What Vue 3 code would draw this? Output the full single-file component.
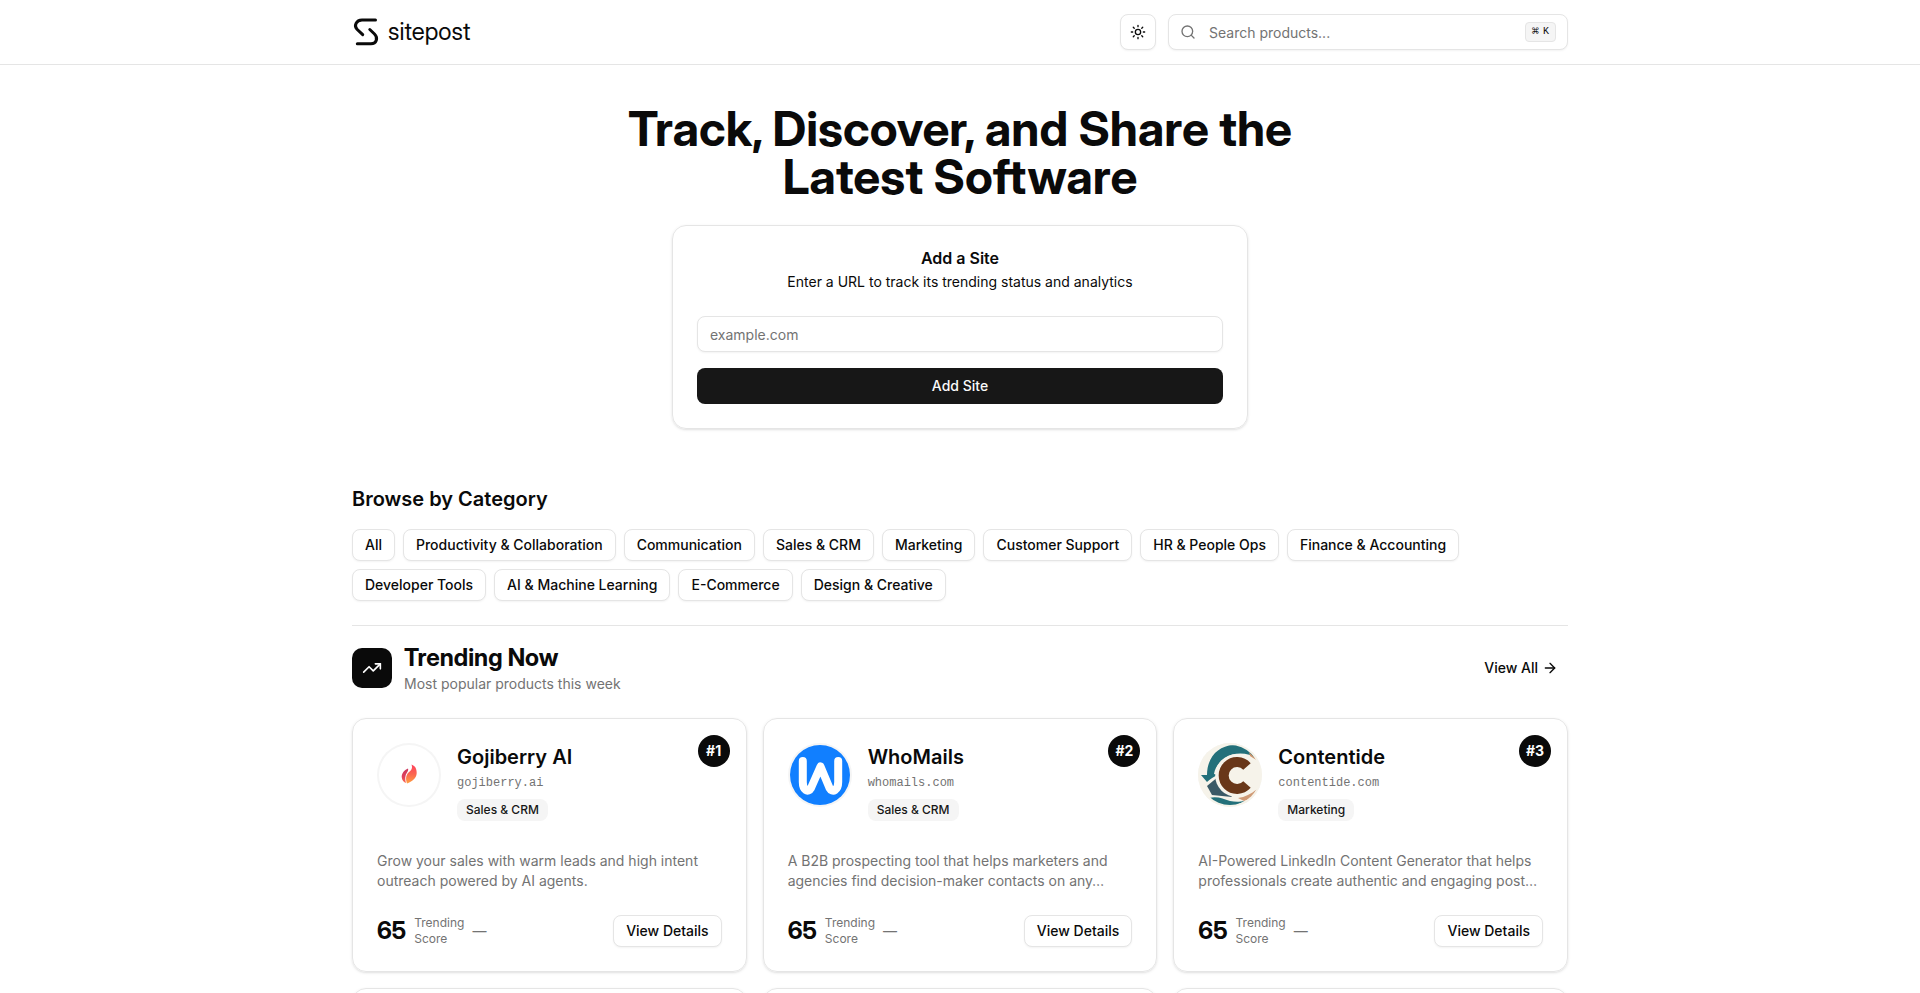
<template>
  <div class="page">
    <header class="site-header">
      <div class="container header-inner">
        <a href="#" class="brand">
          <svg class="brand-mark" viewBox="0 0 28 28" fill="none" stroke="currentColor" stroke-width="3" stroke-linecap="round" stroke-linejoin="round" aria-hidden="true">
            <path d="M23.500 2H10C4 2 1.800 8 5 11.200L10.700 16.700" />
            <path d="M17.800 11.500L22.500 16C26.500 20 24.300 25.800 19 25.800H5.300" />
          </svg>
          <span class="brand-name">sitepost</span>
        </a>
        <div class="header-actions">
          <button type="button" class="theme-toggle" aria-label="Toggle theme">
            <svg class="icon" viewBox="0 0 24 24" aria-hidden="true">
              <circle cx="12" cy="12" r="4" />
              <path d="M12 2v2M12 20v2M4.930 4.930l1.410 1.410M17.660 17.660l1.410 1.410M2 12h2M20 12h2M6.340 17.660l-1.410 1.410M19.070 4.930l-1.410 1.410" />
            </svg>
          </button>
          <label class="search">
            <svg class="icon search-icon" viewBox="0 0 24 24" aria-hidden="true">
              <circle cx="11" cy="11" r="8" />
              <path d="m21 21-4.300-4.300" />
            </svg>
            <input v-model="query" type="text" placeholder="Search products..." aria-label="Search products" />
            <kbd><span class="key-symbol">⌘</span><span>K</span></kbd>
          </label>
        </div>
      </div>
    </header>

    <main class="container">
      <section class="hero">
        <h1>Track, Discover, and Share the Latest Software</h1>
        <form class="add-card" @submit.prevent="addSite">
          <h2>Add a Site</h2>
          <p>Enter a URL to track its trending status and analytics</p>
          <input v-model="siteUrl" type="text" placeholder="example.com" aria-label="Site URL" />
          <button type="submit">Add Site</button>
        </form>
      </section>

      <section class="categories">
        <h2>Browse by Category</h2>
        <div class="category-list">
          <button v-for="category in categories" :key="category" type="button" class="outline-button">{{ category }}</button>
        </div>
      </section>

      <section class="trending">
        <div class="trending-header">
          <div class="trending-icon">
            <svg class="icon" viewBox="0 0 24 24" aria-hidden="true">
              <path d="M16 7h6v6" />
              <path d="m22 7-8.500 8.500-5-5L2 17" />
            </svg>
          </div>
          <div class="trending-title">
            <h2>Trending Now</h2>
            <p>Most popular products this week</p>
          </div>
          <a href="#" class="view-all">
            View All
            <svg class="icon" viewBox="0 0 24 24" aria-hidden="true">
              <path d="M5 12h14" />
              <path d="m12 5 7 7-7 7" />
            </svg>
          </a>
        </div>

        <div class="product-grid">
          <article v-for="product in products" :key="product.domain" class="product-card">
            <span class="rank">#{{ product.rank }}</span>
            <div class="product-head">
              <div class="avatar">
                <svg v-if="product.logo === 'flame'" viewBox="0 0 64 64" aria-hidden="true">
                  <defs>
                    <linearGradient id="flame" x1="0" y1="0" x2="0" y2="1">
                      <stop offset="0" stop-color="#ff405c" />
                      <stop offset="0.5" stop-color="#fb6550" />
                      <stop offset="1" stop-color="#ffa041" />
                    </linearGradient>
                    <linearGradient id="ember" x1="0" y1="0" x2="0" y2="1">
                      <stop offset="0" stop-color="#c9375d" />
                      <stop offset="0.6" stop-color="#e0405c" />
                      <stop offset="1" stop-color="#ff704e" />
                    </linearGradient>
                  </defs>
                  <path d="M34.500 21.500C38.500 23 39.700 26 39.700 30C39.500 35.500 35 38.500 30 40.500C28.500 36 28.800 32 31.500 29.500C34 27.500 36 25.500 34.500 21.500Z" fill="url(#flame)" />
                  <path d="M31 25.500C27 27 24.700 30.500 24.700 34C24.800 37.500 27 39.300 29 40C27.700 36.500 28 32 30 29.500C31 28 31.500 27 31 25.500Z" fill="url(#ember)" />
                </svg>
                <svg v-else-if="product.logo === 'wave'" viewBox="0 0 64 64" aria-hidden="true">
                  <circle cx="32" cy="32" r="30" fill="#117fff" />
                  <path d="M14.800 18V39C14.800 47 20 50.500 23 45L32.500 23.500L41.500 45C44.500 50.500 50.200 47 50.200 39V18" fill="none" stroke="#fff" stroke-width="8" stroke-linecap="round" stroke-linejoin="round" />
                </svg>
                <svg v-else viewBox="0 0 64 64" aria-hidden="true">
                  <defs>
                    <clipPath id="disc"><circle cx="32" cy="32" r="30" /></clipPath>
                  </defs>
                  <circle cx="32" cy="32" r="32" fill="#f6f3ea" />
                  <g clip-path="url(#disc)">
                    <path d="M9 32C9 12 23 1 39 2C49 3 56 9 59 16C50 9 36 9 27 15C20 20 17 25 16 31L20 32C15 34 12 36 9 39L3 32Z" fill="#23707a" />
                    <path d="M51 9L60 18L52 13Z" fill="#cd9269" />
                    <path d="M15 38L20 34L34 54L14 52L9 43Z" fill="#3a5966" />
                    <circle cx="38.700" cy="32.500" r="21.500" fill="#f6f3ea" />
                    <path d="M11 55C20 53 25 56 32 58C37 59 41 59 47 58L34 64H22Z" fill="#23707a" />
                    <path d="M40 55C47 54 53 51 59 46L54 55L46 58Z" fill="#cf9a76" />
                    <path d="M49 23.500A13.400 13.400 0 1 0 49 41.500" fill="none" stroke="#693719" stroke-width="10" />
                  </g>
                </svg>
              </div>
              <div class="product-info">
                <h3>{{ product.name }}</h3>
                <span class="domain">{{ product.domain }}</span>
                <span class="tag">{{ product.category }}</span>
              </div>
            </div>
            <p class="description">{{ product.description }}</p>
            <div class="product-foot">
              <strong>{{ product.score }}</strong>
              <span class="score-label">Trending<br />Score</span>
              <span class="trend">—</span>
              <button type="button" class="outline-button">View Details</button>
            </div>
          </article>
          <article v-for="n in 3" :key="n" class="product-card"></article>
        </div>
      </section>
    </main>
  </div>
</template>

<script setup>
import { ref } from 'vue';

const query = ref('');
const siteUrl = ref('');

const categories = [
  'All',
  'Productivity & Collaboration',
  'Communication',
  'Sales & CRM',
  'Marketing',
  'Customer Support',
  'HR & People Ops',
  'Finance & Accounting',
  'Developer Tools',
  'AI & Machine Learning',
  'E-Commerce',
  'Design & Creative',
];

const products = [
  {
    rank: 1,
    name: 'Gojiberry AI',
    domain: 'gojiberry.ai',
    category: 'Sales & CRM',
    description: 'Grow your sales with warm leads and high intent outreach powered by AI agents.',
    score: 65,
    logo: 'flame',
  },
  {
    rank: 2,
    name: 'WhoMails',
    domain: 'whomails.com',
    category: 'Sales & CRM',
    description: 'A B2B prospecting tool that helps marketers and agencies find decision-maker contacts on any…',
    score: 65,
    logo: 'wave',
  },
  {
    rank: 3,
    name: 'Contentide',
    domain: 'contentide.com',
    category: 'Marketing',
    description: 'AI-Powered LinkedIn Content Generator that helps professionals create authentic and engaging post…',
    score: 65,
    logo: 'tide',
  },
];

const addSite = () => {
  siteUrl.value = '';
};
</script>

<style>
body {
  margin: 0;
  background: #fff;
}
</style>

<style scoped>
.page {
  min-height: 100vh;
  color: #0a0a0a;
  font-family: Inter, "Liberation Sans", sans-serif;
  font-size: 14px;
  line-height: 20px;
}

.page *,
.page *::before {
  box-sizing: border-box;
}

h1,
h2,
h3,
p {
  margin: 0;
}

a {
  color: inherit;
  text-decoration: none;
}

button,
input {
  font: inherit;
  color: inherit;
}

button {
  cursor: pointer;
}

input::placeholder {
  color: #737373;
  opacity: 1;
}

h1,
.brand-name,
.trending-title h2,
.product-foot strong {
  font-family: "Inter Display", Inter, "Liberation Sans", sans-serif;
}

.icon {
  width: 16px;
  height: 16px;
  flex-shrink: 0;
  fill: none;
  stroke: currentColor;
  stroke-width: 2;
  stroke-linecap: round;
  stroke-linejoin: round;
}

.container {
  max-width: 1280px;
  margin: 0 auto;
  padding: 0 32px;
}

.site-header {
  border-bottom: 1px solid #e5e5e5;
}

.header-inner {
  display: flex;
  align-items: center;
  justify-content: space-between;
  height: 64px;
}

.brand {
  display: flex;
  align-items: center;
  gap: 8px;
}

.brand-mark {
  width: 28px;
  height: 28px;
}

.brand-name {
  font-size: 24px;
  line-height: 32px;
}

.header-actions {
  display: flex;
  gap: 12px;
}

.theme-toggle,
.search {
  display: flex;
  align-items: center;
  height: 36px;
  border: 1px solid #e5e5e5;
  border-radius: 8px;
  background: #fff;
  box-shadow: 0 1px 2px rgba(0, 0, 0, 0.05);
}

.theme-toggle {
  justify-content: center;
  width: 36px;
  padding: 0;
}

.search {
  width: 400px;
  padding: 0 11px;
}

.search-icon {
  color: #737373;
}

.search input {
  flex: 1;
  min-width: 0;
  padding: 1px 13px 0;
  border: none;
  outline: none;
  background: none;
}

kbd {
  display: flex;
  align-items: center;
  gap: 4px;
  height: 20px;
  padding: 0 6px;
  border: 1px solid #e5e5e5;
  border-radius: 4px;
  background: #f5f5f5;
  font-family: "Liberation Mono", monospace;
  font-size: 10px;
  font-weight: 500;
}

.key-symbol {
  font-size: 12px;
}

.hero {
  display: flex;
  flex-direction: column;
  align-items: center;
  gap: 24px;
  padding: 40px 0 56px;
}

h1 {
  max-width: 768px;
  font-size: 48px;
  line-height: 48px;
  font-weight: 700;
  text-align: center;
}

.add-card {
  display: flex;
  flex-direction: column;
  width: 100%;
  max-width: 576px;
  padding: 24px;
  border: 1px solid #e5e5e5;
  border-radius: 14px;
  box-shadow: 0 1px 3px rgba(0, 0, 0, 0.1), 0 1px 2px -1px rgba(0, 0, 0, 0.1);
  text-align: center;
}

.add-card h2 {
  margin-bottom: 6px;
  font-size: 16px;
  line-height: 16px;
  font-weight: 600;
}

.add-card p {
  margin-bottom: 24px;
}

.add-card input {
  height: 36px;
  margin-bottom: 16px;
  padding: 0 12px;
  border: 1px solid #e5e5e5;
  border-radius: 8px;
  box-shadow: 0 1px 2px rgba(0, 0, 0, 0.05);
}

.add-card button {
  height: 36px;
  border: none;
  border-radius: 8px;
  background: #171717;
  color: #fafafa;
  font-weight: 500;
}

.categories {
  padding-bottom: 24px;
  border-bottom: 1px solid #e5e5e5;
}

.categories h2 {
  margin-bottom: 16px;
  font-size: 20px;
  line-height: 28px;
  font-weight: 600;
}

.category-list {
  display: flex;
  flex-wrap: wrap;
  gap: 8px;
}

.outline-button {
  height: 32px;
  padding: 0 12px;
  border: 1px solid #e5e5e5;
  border-radius: 8px;
  background: #fff;
  box-shadow: 0 1px 2px rgba(0, 0, 0, 0.05);
  font-weight: 500;
}

.trending {
  padding: 16px 0 40px;
}

.trending-header {
  display: flex;
  align-items: center;
  gap: 12px;
  margin-bottom: 24px;
}

.trending-icon {
  display: flex;
  align-items: center;
  justify-content: center;
  width: 40px;
  height: 40px;
  border-radius: 10px;
  background: #0a0a0a;
  color: #fff;
}

.trending-icon .icon {
  width: 20px;
  height: 20px;
}

.trending-title {
  flex: 1;
}

.trending-title h2 {
  font-size: 24px;
  line-height: 32px;
  font-weight: 700;
}

.trending-title p {
  color: #737373;
}

.view-all {
  display: flex;
  align-items: center;
  gap: 4px;
  padding: 6px 10px;
  font-weight: 500;
}

.product-grid {
  display: grid;
  grid-template-columns: repeat(3, 1fr);
  gap: 16px;
}

.product-card {
  position: relative;
  padding: 24px;
  border: 1px solid #e5e5e5;
  border-radius: 14px;
  box-shadow: 0 1px 3px rgba(0, 0, 0, 0.1), 0 1px 2px -1px rgba(0, 0, 0, 0.1);
}

.rank {
  position: absolute;
  top: 16px;
  right: 16px;
  width: 32px;
  height: 32px;
  border-radius: 50%;
  background: #0a0a0a;
  color: #fff;
  line-height: 32px;
  font-weight: 700;
  text-align: center;
}

.product-head {
  display: flex;
  gap: 16px;
  margin-bottom: 30px;
}

.avatar {
  width: 64px;
  height: 64px;
  flex-shrink: 0;
  border-radius: 50%;
  box-shadow: inset 0 0 0 2px #f5f5f5;
}

.avatar svg {
  display: block;
  width: 64px;
  height: 64px;
}

.product-info {
  display: flex;
  flex-direction: column;
  align-items: flex-start;
}

.product-info h3 {
  margin-bottom: 4px;
  font-size: 20px;
  line-height: 28px;
  font-weight: 600;
}

.domain {
  margin-bottom: 8px;
  color: #737373;
  font-family: "Liberation Mono", monospace;
  font-size: 12px;
  line-height: 16px;
}

.tag {
  padding: 3px 9px;
  border-radius: 8px;
  background: #f5f5f5;
  color: #171717;
  font-size: 12px;
  line-height: 16px;
  font-weight: 500;
}

.description {
  min-height: 40px;
  margin-bottom: 24px;
  color: #737373;
}

.product-foot {
  display: flex;
  align-items: center;
  gap: 8px;
}

.product-foot strong {
  font-size: 24px;
  line-height: 32px;
  font-weight: 700;
}

.score-label {
  color: #737373;
  font-size: 12px;
  line-height: 16px;
}

.trend {
  color: #737373;
}

.product-foot .outline-button {
  margin-left: auto;
}
</style>
